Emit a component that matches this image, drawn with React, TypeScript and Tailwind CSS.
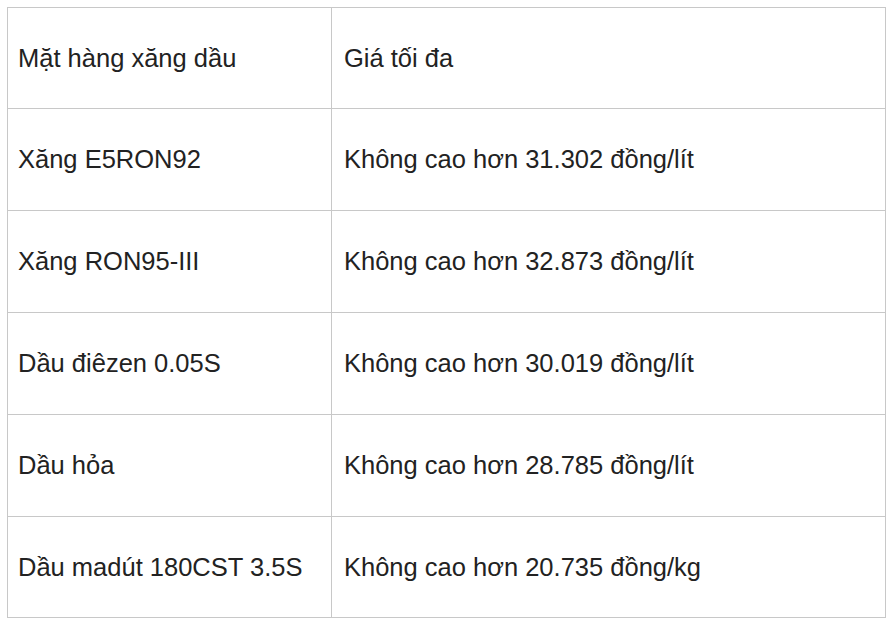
import React from "react";

const rows: [string, string][] = [
  ["Mặt hàng xăng dầu", "Giá tối đa"],
  ["Xăng E5RON92", "Không cao hơn 31.302 đồng/lít"],
  ["Xăng RON95-III", "Không cao hơn 32.873 đồng/lít"],
  ["Dầu điêzen 0.05S", "Không cao hơn 30.019 đồng/lít"],
  ["Dầu hỏa", "Không cao hơn 28.785 đồng/lít"],
  ["Dầu madút 180CST 3.5S", "Không cao hơn 20.735 đồng/kg"],
];

const heights = ["h-[101px]", "h-[102px]", "h-[102px]", "h-[102px]", "h-[102px]", "h-[101px]"];

export default function App() {
  return (
    <div className="w-[887px] h-[624px] bg-white overflow-hidden" style={{ fontFamily: '"Liberation Sans", Arial, sans-serif' }}>
      <div className="ml-[7px] mt-[7px] w-[879px] border-l border-t border-[#c8c8c8] flex flex-col text-[25.5px] text-[#222222]">
        {rows.map((r, i) => (
          <div key={i} className={`flex ${heights[i]}`}>
            <div className="w-[324px] border-r border-b border-[#c8c8c8] flex items-center pl-[10px]">{r[0]}</div>
            <div className="w-[554px] border-r border-b border-[#c8c8c8] flex items-center pl-[12px]">{r[1]}</div>
          </div>
        ))}
      </div>
    </div>
  );
}
